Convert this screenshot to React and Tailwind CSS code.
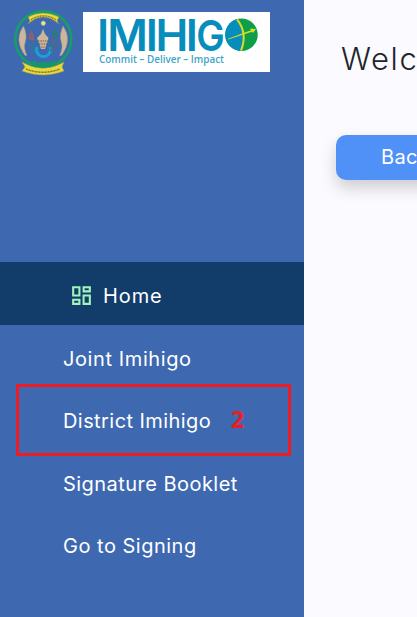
import { MdOutlineDashboard } from 'react-icons/md';

const items = [
  { label: 'Joint Imihigo', tracking: 'tracking-[0.6px]' },
  { label: 'District Imihigo', tracking: 'tracking-[0.43px]' },
  { label: 'Signature Booklet', tracking: 'tracking-[0.46px]' },
  { label: 'Go to Signing', tracking: 'tracking-[0.5px]' },
];

function Emblem() {
  return (
    <svg className="h-[68px] w-[60px] shrink-0" viewBox="13 9 60 68" fill="none">
      <circle cx="43.3" cy="39.2" r="28" stroke="#14a065" strokeWidth="2.5" />
      <path d="M28 24Q43 10 59 24L57 21L59 17Q43 9 28 17L30 21Z" fill="#e9dc3c" stroke="#8f8f45" strokeWidth=".5" />
      <path d="M31 19.8Q43 12 56 19.8" stroke="#77733a" strokeWidth="1.5" strokeDasharray="1 .6" />
      <circle cx="43.3" cy="23.2" r="2.2" fill="#eee39b" stroke="#aeb075" strokeWidth="1" strokeDasharray="1 .7" />
      <path d="M23.5 26Q13.5 40 25 55.5L27 55.5Q23 48 25.5 41Q27.5 35 23.5 26ZM63 26Q73 40 61.5 55.5L59.5 55.5Q63.5 48 61 41Q59 35 63 26Z" fill="#cdb798" stroke="#8e9184" strokeWidth=".5" />
      <path d="M31 30L34 35V41L28 39Z" fill="#8b6070" />
      <path d="M28 46L33 45M29 45L36 48M31 51L36 50M33 42L34 54" stroke="#278679" strokeWidth=".8" strokeDasharray="2 1" />
      <path d="M37 47A7 7 0 1 0 50 47" stroke="#16a4dd" strokeWidth="2.6" />
      <path d="M43 29L45 34L48.5 38L47 43L45 49H41L39 43L37 38L41 34Z" fill="#cbb69a" />
      <path d="M38 41H48M39 44H47M41 47H45" stroke="#735f56" strokeWidth="1.2" strokeDasharray="1.5 .8" />
      <path d="M56 29L54 37L50 52M52 35L58 32M51 41L58 40M50 46L56 48M52 32L58 36" stroke="#23836a" strokeWidth="1.4" strokeDasharray="3 1" />
      <path d="M53 39V43M52 49V51M56 45V47" stroke="#b54162" strokeWidth="1.3" />
      <path d="M30 62L35 61L39 64L43 62L48 64L52 61L57 62L54 67H33Z" fill="#14966b" />
      <path d="M22 62L27 64.5Q43 72 59 64.5L64 62L62 67L64 71Q43 79 22 71L25 67Z" fill="#e8d93b" stroke="#9f9b48" strokeWidth=".5" />
      <path d="M30 64Q43 71 57 64L54 61L48 63L43 61.5L38 63L33 61Z" fill="#14966b" />
      <path d="M26 69Q43 75.5 60 69" stroke="#736f3c" strokeWidth="1.5" strokeDasharray="1 .5" />
    </svg>
  );
}

function Logo() {
  return (
    <svg className="h-[60px] w-[187px] shrink-0 bg-white" viewBox="83 12 187 60">
      <text x="103 127.5 151.8 172 191.8" y="51" textAnchor="middle" fill="#078dbb" className="font-['Inter',sans-serif] text-[44px] font-semibold">IMIHI</text>
      <text x="196.3" y="51" textLength="28.5" lengthAdjust="spacingAndGlyphs" fill="#078dbb" className="font-['Inter',sans-serif] text-[43px] font-semibold">G</text>
      <text x="99" y="62.5" textLength="125" lengthAdjust="spacingAndGlyphs" fill="#3fa5c7" className="font-['Open_Sans',sans-serif] text-[10.5px] font-semibold">Commit – Deliver – Impact</text>
      <circle cx="241.5" cy="34.7" r="16.2" fill="#0e9e49" />
      <path d="M237 19.1A16.2 16.2 0 0 0 241 50.9Q248 33 237 19.1Z" fill="#078dbb" />
      <path d="M237 19.4Q248 33 241 50.7" fill="none" stroke="#d7df22" strokeWidth="2" />
      <path d="M228 38.8L251 30.2L250 28.5L256 29L253 33L252 31.7L228 39.5Z" fill="#d7df22" />
    </svg>
  );
}

export default function App() {
  return (
    <div className="flex h-[617px] w-[417px] overflow-hidden bg-[#fbfbff] font-['Inter',sans-serif]">
      <aside className="relative flex w-[304px] shrink-0 flex-col bg-[#3e69b1] text-[20px] leading-[30px] text-white">
        <header className="flex h-[262px] items-start pl-[13px] pt-[9px]">
          <Emblem />
          <div className="ml-[10px] mt-[3px]"><Logo /></div>
        </header>
        <nav>
          <a className="flex h-[63px] items-center bg-[#123d6b] pl-[69px] pt-1">
            <MdOutlineDashboard className="mr-[9px] size-[25px] shrink-0 text-[#a2f5b8]" />
            <span className="tracking-[0.9px]">Home</span>
          </a>
          {items.map(({ label, tracking }) => (
            <a key={label} className="flex h-[62.5px] items-center pl-[63px] pt-[5px]">
              <span className={`whitespace-nowrap ${tracking}`}>{label}</span>
            </a>
          ))}
        </nav>
        <div className="absolute left-4 top-[384px] flex h-[72px] w-[275px] items-center border-[3px] border-[#ed1c24] pb-[2px] pl-[212px] text-[#ed1c24]">
          <span className="font-['Open_Sans',sans-serif] text-[23px] font-bold leading-none">2</span>
        </div>
      </aside>
      <main className="min-w-0 flex-1 overflow-hidden pl-8 pt-[35px] text-[#212529]">
        <h1 className="ml-[5px] h-[100px] whitespace-nowrap text-[31px] font-light leading-[48px] tracking-[1.6px]">Welcome</h1>
        <button className="h-[45px] w-[160px] rounded-[10px] bg-[#4f91f6] pb-px pl-[45px] text-left text-[20px] tracking-[0.3px] text-white shadow-[0_8px_16px_rgba(0,0,0,0.18)]">Back</button>
      </main>
    </div>
  );
}
